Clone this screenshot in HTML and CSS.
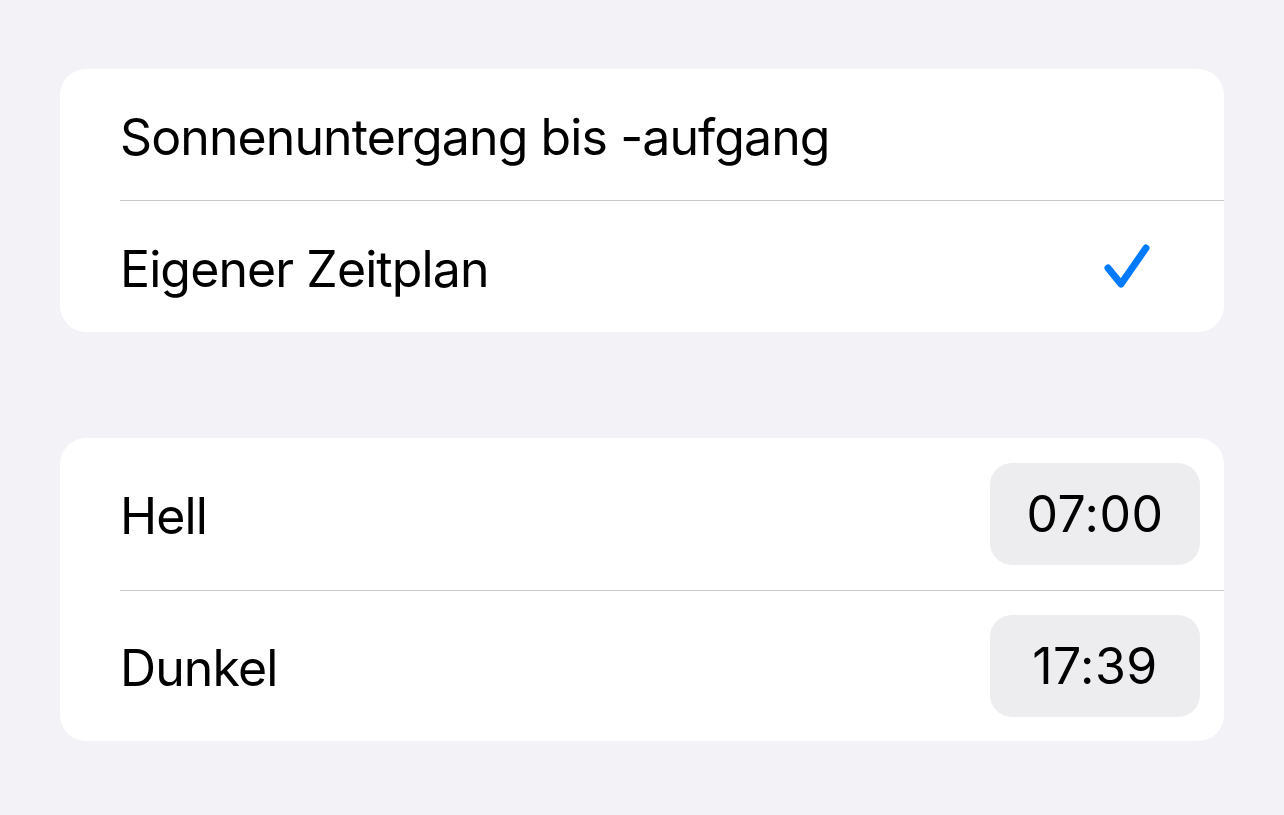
FILE: index.html
```html
<!DOCTYPE html>
<html lang="de">
<head>
<meta charset="utf-8">
<link rel="stylesheet" href="styles.css">
</head>
<body>
<main class="page">
  <section class="card card-top">
    <div class="row row-sm">
      <span class="label">Sonnenuntergang bis -aufgang</span>
    </div>
    <div class="row row-sm">
      <span class="label">Eigener Zeitplan</span>
      <svg class="check" width="50" height="48" viewBox="0 0 50 48">
        <polyline points="6,25 19,41 44,5" fill="none" stroke="#007AFF" stroke-width="7" stroke-linecap="round" stroke-linejoin="round"/>
      </svg>
    </div>
  </section>
  <section class="card card-bottom">
    <div class="row row-lg">
      <span class="label">Hell</span>
      <span class="pill">07:00</span>
    </div>
    <div class="row row-lg">
      <span class="label">Dunkel</span>
      <span class="pill">17:39</span>
    </div>
  </section>
</main>
</body>
</html>
```
FILE: styles.css
```css
html, body {
  margin: 0;
  padding: 0;
  background: #F2F2F7;
}
body {
  font-family: Inter, "Noto Sans", "Liberation Sans", sans-serif;
  color: #000;
  width: 1284px;
  height: 815px;
  overflow: hidden;
}
.page {
  padding: 69px 60px 0 60px;
  display: flex;
  flex-direction: column;
  gap: 106px;
}
.card {
  background: #fff;
  border-radius: 26px;
  padding-left: 60px;
  display: flex;
  flex-direction: column;
}
.row {
  display: flex;
  align-items: center;
  justify-content: space-between;
  box-sizing: border-box;
}
.row + .row {
  border-top: 1px solid #C8C8CC;
}
.row-sm {
  height: 131px;
  padding-right: 72px;
}
.row-sm + .row-sm {
  height: 132px;
}
.row-lg {
  height: 151.5px;
  padding-right: 24px;
}
.label {
  font-size: 50px;
  letter-spacing: -0.9px;
  line-height: 1;
  margin-top: 4px;
}
.check {
  display: block;
}
.pill {
  width: 210px;
  height: 102px;
  border-radius: 22px;
  background: #EDEDEF;
  display: flex;
  align-items: center;
  justify-content: center;
  font-size: 50px;
  letter-spacing: 0.5px;
  line-height: 1;
}
```
